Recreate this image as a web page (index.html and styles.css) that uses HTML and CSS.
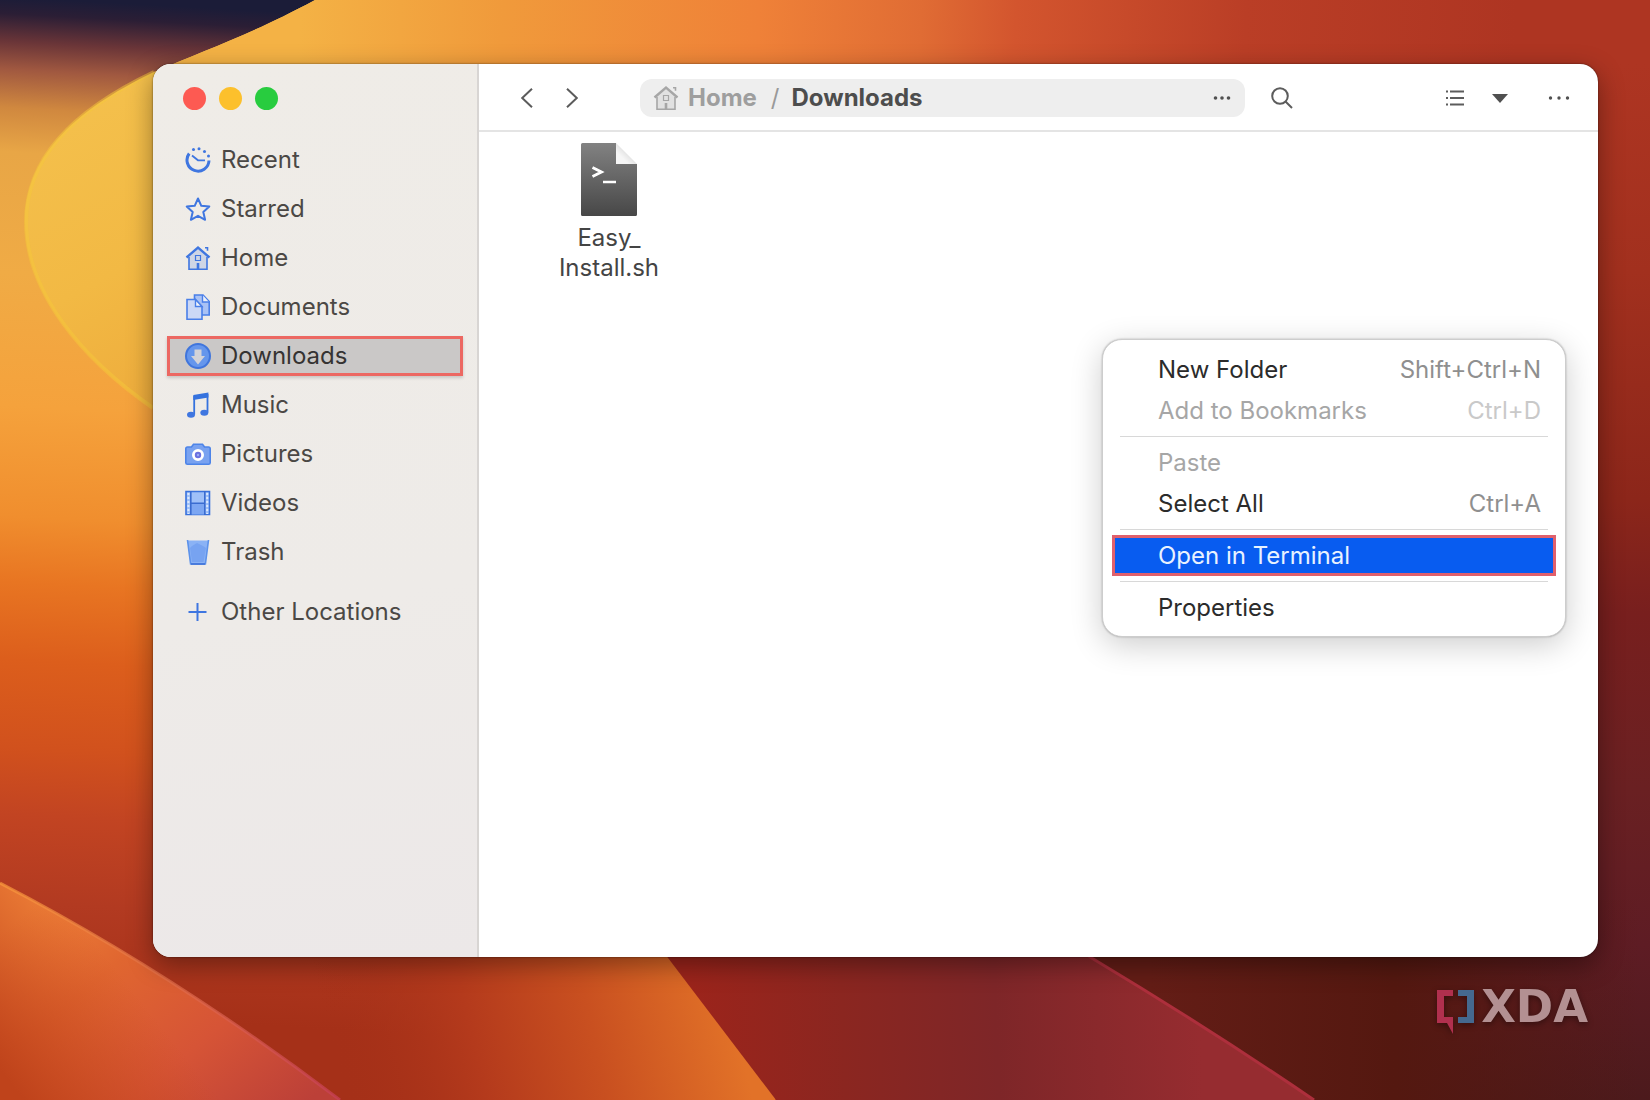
FILE: index.html
```html
<!DOCTYPE html>
<html lang="en">
<head>
<meta charset="utf-8">
<meta name="viewport" content="width=device-width, initial-scale=1">
<title>Downloads</title>
<link rel="stylesheet" href="styles.css">
</head>
<body>
<svg width="0" height="0" class="symbols" aria-hidden="true">
  <symbol id="house" viewBox="0 0 26 26">
    <path class="tint" d="M4 12 13 4l9 8v12H4z"/>
    <path class="line" d="M1.500 12.500 13 2.500l11.500 10" stroke-width="2.400"/>
    <path class="line" d="M4 12v12.200h18V12" stroke-width="1.600"/>
    <path class="line" d="M10.500 10.500h5v5h-5z" stroke-width="1.200"/>
    <path class="line" d="M13 18v6" stroke-width="2.600"/>
    <path class="line" d="M20 2.800h2.500v3" stroke-width="1.600"/>
  </symbol>
</svg>
<div class="desktop">
  <svg class="wallpaper" viewBox="0 0 1650 1100" preserveAspectRatio="none" aria-hidden="true">
    <defs>
      <linearGradient id="left" x1="60" y1="0" x2="0" y2="1100" gradientUnits="userSpaceOnUse">
        <stop offset="0" stop-color="#1b1c38"/><stop offset=".015" stop-color="#2b1e35"/>
        <stop offset=".04" stop-color="#6a3538"/><stop offset=".065" stop-color="#a05840"/>
        <stop offset=".1" stop-color="#d0883f"/><stop offset=".14" stop-color="#e8a646"/>
        <stop offset=".25" stop-color="#f0ab45"/><stop offset=".37" stop-color="#f5a23c"/>
        <stop offset=".47" stop-color="#f08e2e"/><stop offset=".53" stop-color="#e87522"/>
        <stop offset=".6" stop-color="#dc5e1c"/><stop offset=".68" stop-color="#d1511d"/>
        <stop offset=".74" stop-color="#c24422"/><stop offset=".82" stop-color="#b23a21"/>
        <stop offset=".92" stop-color="#a53018"/>
      </linearGradient>
      <linearGradient id="bulb" x1="40" y1="120" x2="200" y2="420" gradientUnits="userSpaceOnUse">
        <stop offset="0" stop-color="#f4c04c"/><stop offset=".5" stop-color="#f2b944"/><stop offset="1" stop-color="#eda93a"/>
      </linearGradient>
      <linearGradient id="top" x1="300" y1="0" x2="1650" y2="60" gradientUnits="userSpaceOnUse">
        <stop offset="0" stop-color="#f4b245"/><stop offset=".15" stop-color="#f09a3b"/>
        <stop offset=".34" stop-color="#ef8138"/><stop offset=".46" stop-color="#e06c34"/>
        <stop offset=".53" stop-color="#d3552e"/><stop offset=".7" stop-color="#ba3e26"/>
        <stop offset=".9" stop-color="#ae3522"/>
      </linearGradient>
      <linearGradient id="right" x1="0" y1="64" x2="0" y2="1100" gradientUnits="userSpaceOnUse">
        <stop offset="0" stop-color="#ae3522"/><stop offset=".2" stop-color="#a2301e"/>
        <stop offset=".42" stop-color="#8c261a"/><stop offset=".53" stop-color="#781f1e"/>
        <stop offset=".7" stop-color="#6a2022"/><stop offset=".85" stop-color="#5e1c24"/>
        <stop offset="1" stop-color="#4c1a1c"/>
      </linearGradient>
      <linearGradient id="corner" x1="40" y1="900" x2="250" y2="1150" gradientUnits="userSpaceOnUse">
        <stop offset="0" stop-color="#ee8038"/><stop offset=".3" stop-color="#e06630"/>
        <stop offset=".65" stop-color="#d65436"/><stop offset="1" stop-color="#bc4038"/>
      </linearGradient>
      <linearGradient id="cornerFade" x1="190" y1="1000" x2="40" y2="1120" gradientUnits="userSpaceOnUse">
        <stop offset=".2" stop-color="#c8481c" stop-opacity="0"/><stop offset="1" stop-color="#bf431b"/>
      </linearGradient>
      <linearGradient id="ember" x1="340" y1="1090" x2="730" y2="1000" gradientUnits="userSpaceOnUse">
        <stop offset="0" stop-color="#a53018" stop-opacity="0"/><stop offset=".35" stop-color="#b43a1c"/>
        <stop offset=".65" stop-color="#c95020"/><stop offset="1" stop-color="#e27228"/>
      </linearGradient>
      <linearGradient id="wine" x1="690" y1="1030" x2="1200" y2="1010" gradientUnits="userSpaceOnUse">
        <stop offset="0" stop-color="#9c241b"/><stop offset=".3" stop-color="#8b2620"/>
        <stop offset=".6" stop-color="#7e2628"/><stop offset="1" stop-color="#962c30"/>
      </linearGradient>
      <linearGradient id="night" x1="1150" y1="0" x2="1640" y2="0" gradientUnits="userSpaceOnUse">
        <stop offset="0" stop-color="#641d16"/><stop offset=".5" stop-color="#541810"/>
        <stop offset="1" stop-color="#541810" stop-opacity="0"/>
      </linearGradient>
      <linearGradient id="edge" x1="0" y1="883" x2="340" y2="1100" gradientUnits="userSpaceOnUse">
        <stop offset="0" stop-color="#fa9a3c"/><stop offset="1" stop-color="#c8405a"/>
      </linearGradient>
    </defs>
    <rect width="1650" height="1100" fill="url(#left)"/>
    <path d="M315 0C250 35 205 50 154 72 70 112 25 160 25 222c0 70 55 136 127 186l350 100V0z" fill="url(#bulb)"/>
    <path d="M154 72C70 112 26 160 26 222c0 70 55 136 127 186" fill="none" stroke="#f5c83a" stroke-opacity=".5" stroke-width="4"/>
    <path d="M315 0C250 35 205 50 154 72L1650 400V0z" fill="url(#top)"/>
    <rect x="1120" y="64" width="530" height="1036" fill="url(#right)"/>
    <path d="M300 900h400l76 200H300z" fill="url(#ember)"/>
    <path d="M624 900h500l220 200H776z" fill="url(#wine)"/>
    <path d="M1000 900h640v200h-326L1090 957z" fill="url(#night)"/>
    <path d="M1000 885 1090 957q120 72 224 143H776L700 900z" fill="url(#wine)"/>
    <path d="m1085 953 5 4q120 72 224 143" fill="none" stroke="#ad2f3c" stroke-width="3"/>
    <path d="M0 883q170 88 340 217H0z" fill="url(#corner)"/>
    <path d="M0 883q170 88 340 217H0z" fill="url(#cornerFade)"/>
    <path d="M0 883q170 88 340 217" fill="none" stroke="url(#edge)" stroke-opacity=".7" stroke-width="3"/>
  </svg>

  <div class="window">
    <aside class="sidebar">
      <div class="lights">
        <button class="light close" aria-label="Close"></button>
        <button class="light minimize" aria-label="Minimize"></button>
        <button class="light maximize" aria-label="Maximize"></button>
      </div>
      <nav class="places" aria-label="Places">
        <a class="place" href="#recent">
          <svg class="icon" viewBox="0 0 26 26"><path class="line" d="M4.200 6.500A11 11 0 1 0 24 13.500" stroke-width="3"/><path class="line" d="m7 8.500 6 4.800h7" stroke-width="1.800"/><g class="solid"><circle cx="8.500" cy="2.600" r="1.500"/><circle cx="14" cy="1.800" r="1.500"/><circle cx="19.500" cy="4.500" r="1.500"/><circle cx="23.500" cy="9" r="1.500"/></g></svg>
          Recent</a>
        <a class="place" href="#starred">
          <svg class="icon" viewBox="0 0 26 26"><path class="line" d="m13 2.500 3.300 7.300 8 .8-6 5.400 1.800 7.800L13 19.800l-7.100 4 1.800-7.800-6-5.400 8-.8z" stroke-width="2" stroke-linejoin="round"/></svg>
          Starred</a>
        <a class="place" href="#home">
          <svg class="icon"><use href="#house"/></svg>
          Home</a>
        <a class="place" href="#documents">
          <svg class="icon" viewBox="0 0 26 26"><path d="M9.500 1h8.500l6.200 6.500V21H9.500z" fill="#a9c2f5" stroke="#4a7fe8" stroke-width="1.600"/><path d="M17.500 1v7h6.500" fill="#edf0f8" stroke="#4a7fe8" stroke-width="1.400"/><path d="M2 5.500h8.500l6.500 7v12.700H2z" fill="#ccd8f6" stroke="#4a7fe8" stroke-width="1.600"/><path d="M10.500 5.500v7H17z" fill="#f4f5fa" stroke="#4a7fe8" stroke-width="1.400"/></svg>
          Documents</a>
        <a class="place current" href="#downloads" aria-current="page">
          <svg class="icon" viewBox="0 0 26 26"><circle cx="13" cy="13" r="12" fill="#6596ec" stroke="#3f75dc" stroke-width="2"/><path d="M9.500 6.500h7V13h3.500L13 21.500 6 13h3.500z" fill="#d3d3d8"/></svg>
          Downloads</a>
        <a class="place" href="#music">
          <svg class="icon" viewBox="0 0 26 26"><path d="M9.200 4v18.500M22.500 2v18.500" stroke="#3572de" stroke-width="1.800"/><path d="M8.300 3 23.400.500v5L8.300 8z" fill="#3572de"/><g class="solid"><ellipse cx="6" cy="22.800" rx="4" ry="3"/><ellipse cx="19.300" cy="20.800" rx="4" ry="3"/></g></svg>
          Music</a>
        <a class="place" href="#pictures">
          <svg class="icon" viewBox="0 0 26 26"><path d="M2.500 6h4l2-2.800h9L19.500 6h4q1.700 0 1.700 1.700v14q0 1.500-1.700 1.500h-21Q.800 23.200.800 21.700v-14Q.800 6 2.500 6z" fill="#79a2f0" stroke="#4d84e8" stroke-width="1.600"/><circle cx="13" cy="14" r="4.600" fill="#6a70e0" stroke="#fff" stroke-width="2.800"/><circle cx="13" cy="14" r="1.200" fill="#9aa8f0"/></svg>
          Pictures</a>
        <a class="place" href="#videos">
          <svg class="icon" viewBox="0 0 26 26"><path d="M1 1.500h23.500v23H1z" fill="#9fc0f8" stroke="#3a72dc" stroke-width="1.600"/><path d="M6 13.500h14v11H6z" fill="#7ca6f2"/><path d="M5.800 1v24M19.800 1v24M6 13.200h14" stroke="#3a6cd0" stroke-width="1.600"/><path d="M3.400 3v21M22.200 3v21" stroke="#dce8fc" stroke-width="2" stroke-dasharray="2 2"/></svg>
          Videos</a>
        <a class="place" href="#trash">
          <svg class="icon" viewBox="0 0 26 26"><path d="M2.500 1.500h21L20.500 25h-15z" fill="#8ab2f5"/><path d="m7 7 5-3 6 3 3 2-2.500 14H7L5 9z" fill="#6f9cf0" opacity=".7"/><path d="M2.500 1 5.600 25h14.800L23.500 1" fill="none" stroke="#5d92ea" stroke-width="1.600"/><path d="M6 25h14" stroke="#3f73d8" stroke-width="1.600"/></svg>
          Trash</a>
        <a class="place other" href="#other">
          <svg class="icon" viewBox="0 0 26 26"><path class="line" d="M12.500 4v18M3.500 13h18" stroke-width="2"/></svg>
          Other Locations</a>
      </nav>
    </aside>

    <main class="main">
      <header class="toolbar">
        <button class="tool" aria-label="Back"><svg width="12" height="20" viewBox="0 0 12 20"><path d="M11 .800 1.200 10l9.800 9.200"/></svg></button>
        <button class="tool" aria-label="Forward"><svg width="12" height="20" viewBox="0 0 12 20"><path d="M1 .800 10.800 10 1 19.200"/></svg></button>
        <div class="pathbar">
          <svg class="icon gray" aria-hidden="true"><use href="#house"/></svg>
          <a class="crumb" href="#home">Home</a>
          <span class="slash">/</span>
          <a class="crumb here" href="#downloads">Downloads</a>
          <button class="path-more" aria-label="Path options"><svg width="18" height="4" viewBox="0 0 18 4"><g class="dots"><circle cx="2.500" cy="2" r="1.800"/><circle cx="9" cy="2" r="1.800"/><circle cx="15.500" cy="2" r="1.800"/></g></svg></button>
        </div>
        <button class="tool search" aria-label="Search"><svg width="22" height="22" viewBox="0 0 22 22"><circle cx="9" cy="9" r="7.800"/><path d="m14.500 14.500 6.500 6.500"/></svg></button>
        <button class="tool" aria-label="List view"><svg width="20" height="16" viewBox="0 0 20 16"><path d="M1 1.500h2M5 1.500h14M1 8h2M5 8h14M1 14.500h2M5 14.500h14"/></svg></button>
        <button class="tool" aria-label="View options"><svg width="16" height="9" viewBox="0 0 16 9"><path class="caret" d="M0 0h16L8 9z"/></svg></button>
        <button class="tool menu" aria-label="Main menu"><svg width="22" height="4" viewBox="0 0 22 4"><g class="dots"><circle cx="2.500" cy="2" r="1.700"/><circle cx="11" cy="2" r="1.700"/><circle cx="19.500" cy="2" r="1.700"/></g></svg></button>
      </header>

      <div class="files">
        <figure class="file">
          <svg width="56" height="74" viewBox="0 0 56 74" aria-hidden="true">
            <defs>
              <linearGradient id="sheet" x1="0" y1="0" x2="0" y2="1"><stop offset="0" stop-color="#828282"/><stop offset="1" stop-color="#474747"/></linearGradient>
              <linearGradient id="fold" x1="1" y1="0" x2="0" y2="1"><stop offset=".4" stop-color="#dcdcdc"/><stop offset=".7" stop-color="#f6f6f6"/></linearGradient>
            </defs>
            <path d="M1.500 0H35v21h21v50.500q0 1.500-1.500 1.500h-53Q0 73 0 71.500v-70Q0 0 1.500 0z" fill="url(#sheet)"/>
            <path d="M35 0 56 21H35z" fill="url(#fold)"/>
            <path d="m11.500 24.500 9 4.500-9 4.500" fill="none" stroke="#fff" stroke-width="2.800"/>
            <path d="M22 39h13" stroke="#fff" stroke-width="2.600"/>
          </svg>
          <figcaption>Easy_<wbr>Install.sh</figcaption>
        </figure>

        <div class="context" role="menu">
          <button class="item" role="menuitem">New Folder <kbd>Shift+Ctrl+N</kbd></button>
          <button class="item" role="menuitem" disabled>Add to Bookmarks <kbd>Ctrl+D</kbd></button>
          <hr>
          <button class="item" role="menuitem" disabled>Paste</button>
          <button class="item" role="menuitem">Select All <kbd>Ctrl+A</kbd></button>
          <hr>
          <button class="item active" role="menuitem">Open in Terminal</button>
          <hr>
          <button class="item" role="menuitem">Properties</button>
        </div>
      </div>
    </main>
  </div>

  <footer class="brand">
    <svg width="38" height="44" viewBox="0 0 38 44" aria-hidden="true">
      <path d="M0 0h16v6H7v21h9v17L10 33H0z" fill="#b0304e"/>
      <path d="M21 0h16v33H21v-6h9V6h-9z" fill="#45698f"/>
    </svg>
    <span class="brand-name">XDA</span>
  </footer>
</div>
</body>
</html>
```
FILE: styles.css
```css
* {
  box-sizing: border-box;
}

body {
  margin: 0;
  font-family: Inter, "Liberation Sans", sans-serif;
  font-size: 24px;
  font-optical-sizing: none;
  line-height: 30px;
}

button {
  padding: 0;
  border: 0;
  background: none;
  font: inherit;
  font-optical-sizing: none;
  color: inherit;
}

a {
  color: inherit;
  text-decoration: none;
}

.symbols {
  position: absolute;
}

.desktop {
  position: relative;
  display: flex;
  flex-direction: column;
  min-height: 100vh;
  padding: 64px 52px 0 153px;
  overflow: hidden;
}

.wallpaper {
  position: absolute;
  inset: 0;
  width: 100%;
  height: 100%;
}

/* Window */
.window {
  position: relative;
  display: flex;
  flex: 1;
  border-radius: 18px;
  overflow: hidden;
  background: #fff;
  box-shadow: 0 0 2px rgba(0, 0, 0, .6), 0 8px 26px rgba(0, 0, 0, .38);
}

.sidebar {
  flex: 0 0 326px;
  padding: 0 14px;
  border-right: 2px solid #d8d5d3;
  background: linear-gradient(170deg, #efece7, #eeebe8 60%, #ece8e8);
}

.lights {
  display: flex;
  align-items: center;
  gap: 13px;
  height: 68px;
  padding-left: 16px;
}

.light {
  width: 23px;
  height: 23px;
  border-radius: 50%;
}

.close { background: #fd5a52; }
.minimize { background: #fcc02c; }
.maximize { background: #28cc3f; }

.places {
  display: flex;
  flex-direction: column;
  gap: 9px;
  margin-top: 8px;
}

.place {
  display: flex;
  align-items: center;
  gap: 10px;
  height: 40px;
  padding-left: 18px;
  color: #4b4845;
}

.place.current {
  padding-left: 15px;
  border: 3px solid #ec6862;
  background: #cac8c7;
  box-shadow: 0 2px 3px rgba(0, 0, 0, .16);
  color: #353332;
}

.place.other {
  margin-top: 11px;
}

.icon {
  flex: none;
  width: 26px;
  height: 26px;
  color: #3f76e0;
}

.icon.gray {
  color: #a6a6a6;
}

.line {
  fill: none;
  stroke: currentColor;
}

.solid {
  fill: #3f76e0;
}

.tint {
  fill: currentColor;
  fill-opacity: .18;
}

/* Main pane */
.main {
  display: flex;
  flex: 1;
  flex-direction: column;
  min-width: 0;
}

.toolbar {
  display: flex;
  align-items: center;
  height: 68px;
  padding: 2px 17px 0 25px;
  border-bottom: 2px solid #e4e4e4;
  color: #555;
}

.tool {
  display: grid;
  flex: 0 0 45px;
  place-items: center;
  height: 40px;
}

.tool svg {
  fill: none;
  stroke: #5c5c5c;
  stroke-width: 2;
}

.tool .dots,
.tool .caret,
.path-more .dots {
  fill: #505050;
  stroke: none;
}

.pathbar {
  display: flex;
  flex: 1;
  align-items: center;
  height: 38px;
  margin-left: 46px;
  padding: 0 14px 0 13px;
  border-radius: 12px;
  background: #eee;
  font-weight: 700;
}

.crumb {
  margin-left: 9px;
  color: #9e9e9e;
}

.slash {
  margin-left: 14px;
  color: #999;
  font-weight: 400;
}

.crumb.here {
  margin-left: 12px;
  color: #4d4d4d;
}

.path-more {
  display: grid;
  place-items: center;
  height: 38px;
  margin-left: auto;
}

.search {
  margin: 0 128px 0 14px;
}

.menu {
  margin-left: 14px;
}

.files {
  position: relative;
  flex: 1;
  min-height: 540px;
  padding: 11px 70px;
}

.file {
  display: flex;
  flex-direction: column;
  align-items: center;
  gap: 6px;
  width: 120px;
  margin: 0;
  text-align: center;
  color: #444;
}

/* Context menu */
.context {
  position: absolute;
  top: 207px;
  right: 32px;
  display: flex;
  flex-direction: column;
  width: 464px;
  padding: 9px 9px 8px;
  border: 1px solid #cdcdcd;
  border-radius: 20px;
  background: #fff;
  box-shadow: 0 0 2px rgba(0, 0, 0, .3), 0 8px 32px rgba(0, 0, 0, .2);
  color: #2b2b2b;
}

.item {
  display: flex;
  align-items: center;
  justify-content: space-between;
  height: 41px;
  padding: 0 15px 0 46px;
  text-align: left;
}

.item:disabled {
  color: #a6a6a6;
}

.item kbd {
  font: inherit;
  color: #8f8f8f;
}

.item:disabled kbd {
  color: #c9c9c9;
}

.item.active {
  padding-left: 43px;
  border: 3px solid #e0606c;
  background: #085cf0;
  color: #e8f2ff;
}

.context hr {
  width: calc(100% - 16px);
  height: 1px;
  margin: 5px 8px;
  border: 0;
  background: #d8d8d8;
}

/* Watermark */
.brand {
  position: relative;
  display: flex;
  justify-content: flex-end;
  gap: 6px;
  height: 143px;
  padding: 33px 10px 0 0;
  filter: drop-shadow(0 2px 3px rgba(0, 0, 0, .4));
}

.brand-name {
  color: #b39092;
  font-family: "DejaVu Sans", sans-serif;
  font-size: 45px;
  font-weight: 700;
  line-height: 34px;
}
```
